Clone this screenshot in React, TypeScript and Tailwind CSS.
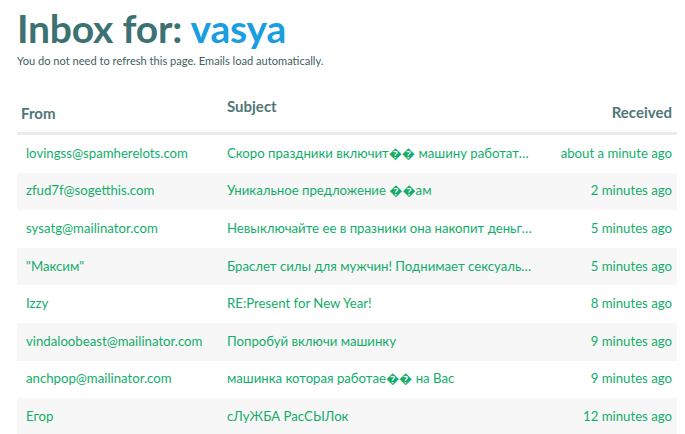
const emails = [
  { from: "lovingss@spamherelots.com", subject: "Скоро праздники включит�� машину работать на Вас", time: "about a minute ago" },
  { from: "zfud7f@sogetthis.com", subject: "Уникальное предложение ��ам", time: "2 minutes ago" },
  { from: "sysatg@mailinator.com", subject: "Невыключайте ее в празники она накопит деньги для Вас", time: "5 minutes ago" },
  { from: "\"Максим\"", subject: "Браслет силы для мужчин! Поднимает сексуальное желание", time: "5 minutes ago" },
  { from: "Izzy", subject: "RE:Present for New Year!", time: "8 minutes ago" },
  { from: "vindaloobeast@mailinator.com", subject: "Попробуй включи машинку", time: "9 minutes ago" },
  { from: "anchpop@mailinator.com", subject: "машинка которая работае�� на Вас", time: "9 minutes ago" },
  { from: "Егор", subject: "сЛуЖБА РасСЫЛок", time: "12 minutes ago" },
];

export default function App() {
  return (
    <div className="h-[434px] w-[685px] overflow-hidden bg-white font-['Lato','Noto_Sans',sans-serif]">
      <div className="pl-[17px] pr-[8px] pt-[5px]">
        <h1 className="text-[39px] font-bold leading-[46px] tracking-[-0.2px] text-[#3d7272]">
          Inbox for: <span className="text-[#1a9ee0]">vasya</span>
        </h1>
        <p className="mt-[3px] text-[11.1px] leading-[14px] text-[#3f5f5f]">
          You do not need to refresh this page. Emails load automatically.
        </p>

        <div className="mt-[19px]">
          <div className="flex h-[48px] border-b-[3px] border-[#ebebeb] text-[15px] font-bold text-[#4f7777]">
            <div className="w-[201px] pl-[4px] pt-[15px]">From</div>
            <div className="flex-1 pl-[9px] pt-[8px]">Subject</div>
            <div className="w-[140px] pr-[5px] pt-[14px] text-right">Received</div>
          </div>
          {emails.map((e, i) => (
            <div
              key={i}
              className={
                "flex h-[37.6px] items-center text-[13.2px] text-[#12ad6a] " +
                (i % 2 === 1 ? "bg-[#f7f7f7]" : "bg-white")
              }
            >
              <div className="w-[201px] shrink-0 truncate pl-[9px]">{e.from}</div>
              <div className="w-[314px] shrink-0 truncate pl-[9px]">{e.subject}</div>
              <div className="flex-1 truncate pr-[5px] text-right">{e.time}</div>
            </div>
          ))}
        </div>
      </div>
    </div>
  );
}
